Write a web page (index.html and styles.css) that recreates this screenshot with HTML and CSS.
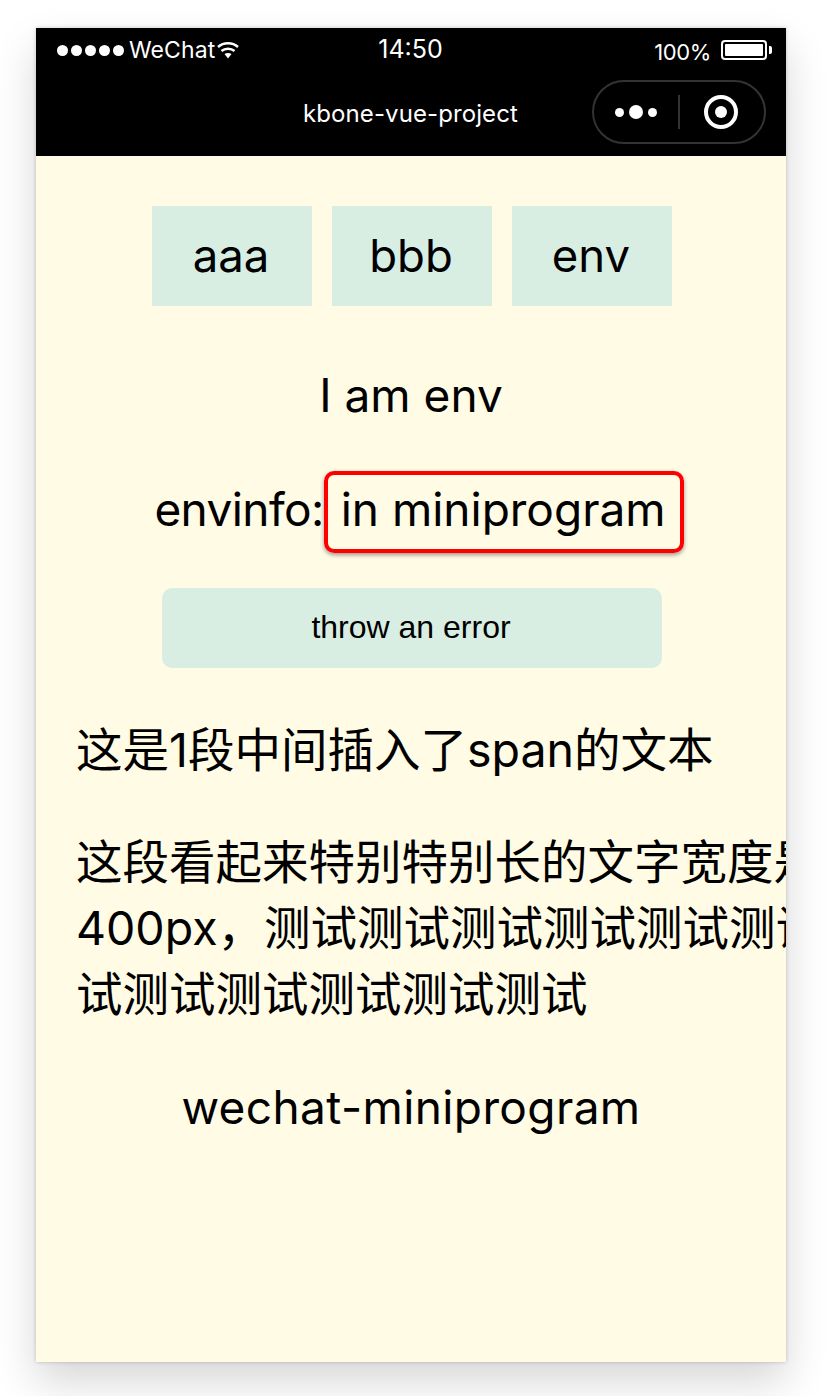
FILE: index.html
```html
<!DOCTYPE html>
<html lang="zh">
<head>
  <meta charset="UTF-8" />
  <title>kbone-vue-project</title>
  <link rel="stylesheet" href="styles.css">
</head>
<body>
  <div class="phone">
    <div class="status-bar">
      <div class="status-left">
        <span class="signal"><i></i><i></i><i></i><i></i><i></i></span>
        <span class="carrier">WeChat</span>
        <svg class="wifi" width="22" height="18" viewBox="0 0 22 18">
          <path d="M1 6C6.5 1 15.5 1 21 6" fill="none" stroke="#fff" stroke-width="2.4" />
          <path d="M4.5 10C8 7 14 7 17.5 10" fill="none" stroke="#fff" stroke-width="2.4" />
          <path d="M7.5 13C9.5 11.8 12.5 11.8 14.5 13L11 17.5Z" fill="#fff" />
        </svg>
      </div>
      <div class="status-time">14:50</div>
      <div class="status-right">
        <span class="battery-text">100%</span>
        <span class="battery"><b></b></span>
        <span class="battery-tip"></span>
      </div>
    </div>
    <div class="nav-bar">
      <div class="nav-title">kbone-vue-project</div>
      <div class="capsule">
        <div class="capsule-dots"><i></i><i class="big"></i><i></i></div>
        <div class="capsule-line"></div>
        <div class="capsule-target"><i></i></div>
      </div>
    </div>
    <div class="content">
      <div class="tabs">
        <div class="tab">aaa</div>
        <div class="tab">bbb</div>
        <div class="tab">env</div>
      </div>
      <div class="env-title">I am env</div>
      <div class="env-info"><span class="env-label">envinfo:</span><span class="env-value">in miniprogram</span></div>
      <button class="error-btn">throw an error</button>
      <p class="para first">这是1段中间插入了<span>span</span>的文本</p>
      <p class="para long">这段看起来特别特别长的文字宽度是400px，测试测试测试测试测试测试测试测试测试测试测试测试</p>
      <div class="platform">wechat-miniprogram</div>
    </div>
  </div>
</body>
</html>
```

FILE: styles.css
```css
html, body {
  margin: 0;
  padding: 0;
  background: #fff;
}
body {
  width: 832px;
  height: 1396px;
  overflow: hidden;
  font-family: "Inter", "Noto Sans CJK SC", sans-serif;
  color: #000;
}
.phone {
  width: 750px;
  height: 1334px;
  margin: 28px 0 0 36px;
  display: flex;
  flex-direction: column;
  box-shadow: 0 20px 40px rgba(0,0,0,0.16), 0 0 4px rgba(0,0,0,0.2);
}
.status-bar {
  height: 44px;
  padding: 0 14px 0 21px;
  background: #000;
  color: #fff;
  display: grid;
  grid-template-columns: 1fr auto 1fr;
  align-items: center;
}
.status-left {
  display: flex;
  align-items: center;
}
.signal {
  display: flex;
  gap: 3px;
  margin-right: 5px;
}
.signal i {
  width: 11px;
  height: 11px;
  border-radius: 50%;
  background: #fff;
}
.carrier {
  font-size: 23px;
  letter-spacing: 0.1px;
}
.wifi {
  margin-left: 2px;
}
.status-time {
  font-size: 25px;
  margin-top: -3px;
  margin-left: -8px;
}
.status-right {
  display: flex;
  align-items: center;
  justify-content: flex-end;
}
.battery-text {
  font-size: 22px;
  letter-spacing: -0.4px;
  margin-right: 10px;
  margin-top: 4px;
}
.battery {
  width: 46px;
  height: 20px;
  box-sizing: border-box;
  border: 2px solid #fff;
  border-radius: 4px;
  padding: 2px;
  display: flex;
}
.battery b {
  flex: 1;
  background: #fff;
  border-radius: 1px;
}
.battery-tip {
  width: 3px;
  height: 8px;
  margin-left: 2px;
  background: #fff;
  border-radius: 0 2px 2px 0;
}
.nav-bar {
  height: 84px;
  background: #000;
  color: #fff;
  display: flex;
  align-items: center;
  justify-content: center;
  position: relative;
}
.nav-title {
  font-size: 24px;
  letter-spacing: 0.1px;
  margin-top: -2px;
  margin-right: 1px;
}
.capsule {
  position: absolute;
  right: 20px;
  top: 8px;
  width: 174px;
  height: 64px;
  box-sizing: border-box;
  border: 2px solid #333;
  border-radius: 32px;
  display: flex;
  align-items: center;
}
.capsule-dots {
  width: 84px;
  display: flex;
  align-items: center;
  justify-content: center;
  gap: 5px;
}
.capsule-dots i {
  width: 9px;
  height: 9px;
  border-radius: 50%;
  background: #fff;
}
.capsule-dots i.big {
  width: 14px;
  height: 14px;
}
.capsule-line {
  width: 2px;
  height: 34px;
  background: #333;
}
.capsule-target {
  width: 34px;
  height: 34px;
  margin-left: 24px;
  box-sizing: border-box;
  border: 4px solid #fff;
  border-radius: 50%;
  display: flex;
  align-items: center;
  justify-content: center;
}
.capsule-target i {
  width: 12px;
  height: 12px;
  border-radius: 50%;
  background: #fff;
}
.content {
  flex: 1;
  background: #fffbe5;
  overflow: hidden;
  padding-left: 2px;
  display: flex;
  flex-direction: column;
  align-items: center;
}
.tabs {
  display: flex;
  gap: 20px;
  margin-top: 50px;
}
.tab {
  width: 158px;
  height: 100px;
  padding-right: 2px;
  background: #d8eee3;
  font-size: 45.5px;
  line-height: 100px;
  text-align: center;
}
.env-title {
  margin-top: 63px;
  margin-left: -2px;
  font-size: 46px;
  line-height: 52px;
}
.env-info {
  margin-top: 50px;
  margin-left: 14px;
  font-size: 46px;
  line-height: 52px;
  display: flex;
  align-items: baseline;
}
.env-label {
  letter-spacing: -0.6px;
}
.env-value {
  padding: 8px 14px 14px 13px;
  border: 4px solid #f00;
  border-radius: 10px;
  box-shadow: 0 2px 4px rgba(0,0,0,0.4);
}
.error-btn {
  margin-top: 35px;
  width: 500px;
  height: 80px;
  padding: 0 2px 2px 0;
  border: none;
  border-radius: 10px;
  background: #d8eee3;
  font-family: "Liberation Sans", sans-serif;
  font-size: 32px;
  color: #000;
}
.para {
  margin: 0;
  font-size: 46.5px;
  line-height: 66px;
  align-self: flex-start;
}
.first {
  margin: 49px 0 0 38px;
}
.long {
  width: 800px;
  margin: 46px 0 0 38px;
}
.platform {
  margin-top: 54px;
  margin-left: -2px;
  font-size: 46px;
  line-height: 52px;
  letter-spacing: 0.4px;
}
```
